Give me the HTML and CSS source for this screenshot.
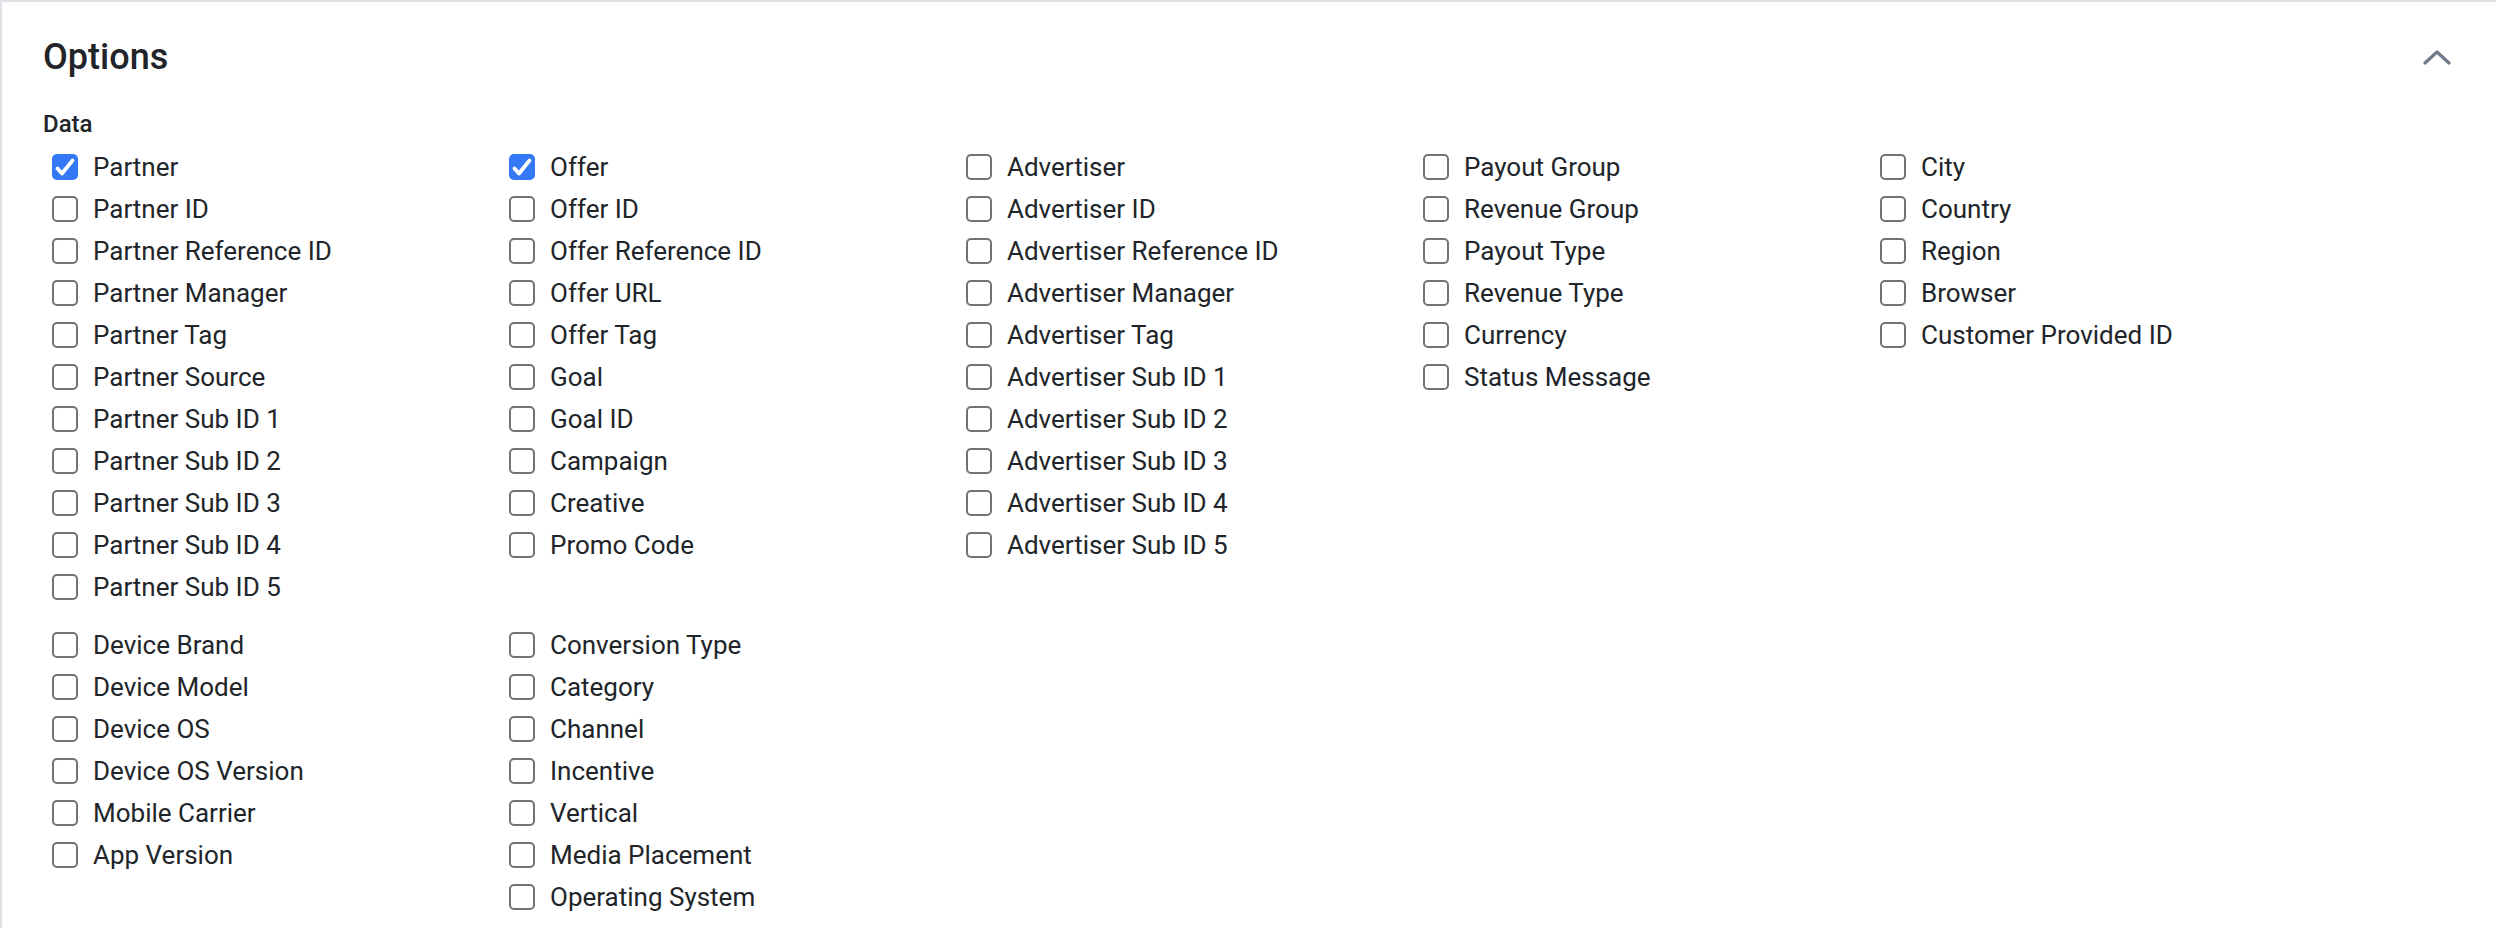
FILE: index.html
```html
<!DOCTYPE html>
<html lang="en">
<head>
  <meta charset="UTF-8" />
  <meta name="viewport" content="width=device-width, initial-scale=1.0"/>
  <title>Options</title>
  <link rel="stylesheet" href="styles.css">
</head>
<body>
  <div class="card">
    <div class="card-head">
      <h2>Options</h2>
      <svg class="chevron" width="28" height="16" viewBox="0 0 28 16">
        <path d="M2 14 L14 3 L26 14" fill="none" stroke="#6f7a8b" stroke-width="3.2" stroke-linecap="round" stroke-linejoin="round"/>
      </svg>
    </div>

    <div class="group-label">Data</div>

    <div class="group">
      <div class="col">
        <label class="opt"><span class="box on"><svg viewBox="0 0 26 26" width="26" height="26"><path d="M5.5 14.5 L10 19.5 L20.5 6.5" fill="none" stroke="#fff" stroke-width="3.8" stroke-linecap="round" stroke-linejoin="round"/></svg></span>Partner</label>
        <label class="opt"><span class="box"></span>Partner ID</label>
        <label class="opt"><span class="box"></span>Partner Reference ID</label>
        <label class="opt"><span class="box"></span>Partner Manager</label>
        <label class="opt"><span class="box"></span>Partner Tag</label>
        <label class="opt"><span class="box"></span>Partner Source</label>
        <label class="opt"><span class="box"></span>Partner Sub ID 1</label>
        <label class="opt"><span class="box"></span>Partner Sub ID 2</label>
        <label class="opt"><span class="box"></span>Partner Sub ID 3</label>
        <label class="opt"><span class="box"></span>Partner Sub ID 4</label>
        <label class="opt"><span class="box"></span>Partner Sub ID 5</label>
      </div>
      <div class="col">
        <label class="opt"><span class="box on"><svg viewBox="0 0 26 26" width="26" height="26"><path d="M5.5 14.5 L10 19.5 L20.5 6.5" fill="none" stroke="#fff" stroke-width="3.8" stroke-linecap="round" stroke-linejoin="round"/></svg></span>Offer</label>
        <label class="opt"><span class="box"></span>Offer ID</label>
        <label class="opt"><span class="box"></span>Offer Reference ID</label>
        <label class="opt"><span class="box"></span>Offer URL</label>
        <label class="opt"><span class="box"></span>Offer Tag</label>
        <label class="opt"><span class="box"></span>Goal</label>
        <label class="opt"><span class="box"></span>Goal ID</label>
        <label class="opt"><span class="box"></span>Campaign</label>
        <label class="opt"><span class="box"></span>Creative</label>
        <label class="opt"><span class="box"></span>Promo Code</label>
      </div>
      <div class="col">
        <label class="opt"><span class="box"></span>Advertiser</label>
        <label class="opt"><span class="box"></span>Advertiser ID</label>
        <label class="opt"><span class="box"></span>Advertiser Reference ID</label>
        <label class="opt"><span class="box"></span>Advertiser Manager</label>
        <label class="opt"><span class="box"></span>Advertiser Tag</label>
        <label class="opt"><span class="box"></span>Advertiser Sub ID 1</label>
        <label class="opt"><span class="box"></span>Advertiser Sub ID 2</label>
        <label class="opt"><span class="box"></span>Advertiser Sub ID 3</label>
        <label class="opt"><span class="box"></span>Advertiser Sub ID 4</label>
        <label class="opt"><span class="box"></span>Advertiser Sub ID 5</label>
      </div>
      <div class="col">
        <label class="opt"><span class="box"></span>Payout Group</label>
        <label class="opt"><span class="box"></span>Revenue Group</label>
        <label class="opt"><span class="box"></span>Payout Type</label>
        <label class="opt"><span class="box"></span>Revenue Type</label>
        <label class="opt"><span class="box"></span>Currency</label>
        <label class="opt"><span class="box"></span>Status Message</label>
      </div>
      <div class="col">
        <label class="opt"><span class="box"></span>City</label>
        <label class="opt"><span class="box"></span>Country</label>
        <label class="opt"><span class="box"></span>Region</label>
        <label class="opt"><span class="box"></span>Browser</label>
        <label class="opt"><span class="box"></span>Customer Provided ID</label>
      </div>
    </div>

    <div class="group">
      <div class="col">
        <label class="opt"><span class="box"></span>Device Brand</label>
        <label class="opt"><span class="box"></span>Device Model</label>
        <label class="opt"><span class="box"></span>Device OS</label>
        <label class="opt"><span class="box"></span>Device OS Version</label>
        <label class="opt"><span class="box"></span>Mobile Carrier</label>
        <label class="opt"><span class="box"></span>App Version</label>
      </div>
      <div class="col">
        <label class="opt"><span class="box"></span>Conversion Type</label>
        <label class="opt"><span class="box"></span>Category</label>
        <label class="opt"><span class="box"></span>Channel</label>
        <label class="opt"><span class="box"></span>Incentive</label>
        <label class="opt"><span class="box"></span>Vertical</label>
        <label class="opt"><span class="box"></span>Media Placement</label>
        <label class="opt"><span class="box"></span>Operating System</label>
      </div>
    </div>
  </div>
</body>
</html>
```

FILE: styles.css
```css
body {
  margin: 0;
  font-family: Roboto, "Liberation Sans", sans-serif;
  color: #212529;
  background: #fff;
}
.card {
  border-top: 2px solid #dee2e6;
  border-left: 2px solid #dee2e6;
  padding: 34px 45px 40px 41px;
}
.card-head {
  display: flex;
  justify-content: space-between;
  align-items: center;
  height: 42px;
}
.card-head h2 {
  margin: 0;
  font-size: 36px;
  line-height: 42px;
  font-weight: 500;
}
.chevron {
  display: block;
}
.group-label {
  margin-top: 32px;
  font-size: 24px;
  line-height: 28px;
  font-weight: 500;
}
.group {
  display: grid;
  grid-template-columns: repeat(5, 457px);
  margin-top: 16px;
  padding-left: 9px;
}
.group-label + .group {
  margin-top: 8px;
}
.col {
  display: flex;
  flex-direction: column;
}
.opt {
  display: flex;
  align-items: center;
  height: 42px;
  font-size: 26px;
  line-height: 42px;
  white-space: nowrap;
}
.box {
  box-sizing: border-box;
  width: 26px;
  height: 26px;
  margin-right: 15px;
  border: 2px solid #737373;
  border-radius: 5px;
  background: #fff;
  flex: none;
}
.box.on {
  border: none;
  background: #3478f6;
}
.box svg {
  display: block;
}
```
